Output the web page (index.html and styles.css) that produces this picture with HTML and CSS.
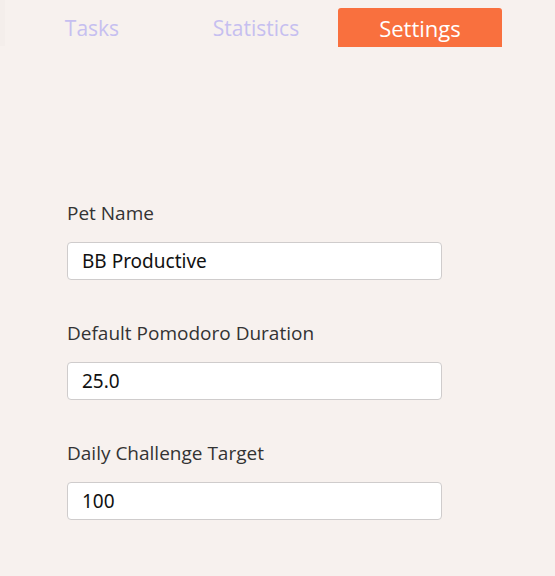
FILE: index.html
```html
<!DOCTYPE html>
<html>
<head>
<meta charset="utf-8">
<link rel="stylesheet" href="styles.css">
</head>
<body>
<div class="edge"></div>
<nav class="tabs">
  <div class="tab">Tasks</div>
  <div class="tab">Statistics</div>
  <div class="tab active">Settings</div>
</nav>
<main class="settings">
  <div class="field">
    <label class="label">Pet Name</label>
    <input class="input" type="text" value="BB Productive">
  </div>
  <div class="field">
    <label class="label">Default Pomodoro Duration</label>
    <input class="input" type="text" value="25.0">
  </div>
  <div class="field">
    <label class="label">Daily Challenge Target</label>
    <input class="input" type="text" value="100">
  </div>
</main>
</body>
</html>
```
FILE: styles.css
```css
html, body {
  margin: 0;
  padding: 0;
  background: #f7f1ee;
  height: 100%;
}
body {
  position: relative;
  font-family: "Open Sans", "Noto Sans", sans-serif;
}
.edge {
  position: absolute;
  left: 0;
  top: 0;
  width: 5px;
  height: 46px;
  background: #f4eeeb;
}
.tabs {
  display: flex;
  padding: 8px 10px 0;
}
.tab {
  width: 164px;
  height: 39px;
  display: flex;
  align-items: center;
  justify-content: center;
  font-size: 21px;
  color: #c6bff0;
  box-sizing: border-box;
}
.tab.active {
  background: #f9703e;
  color: #ffffff;
  border-radius: 3px 3px 0 0;
  font-size: 22px;
}
.settings {
  padding: 154px 0 0 67px;
  display: flex;
  flex-direction: column;
  gap: 41px;
}
.field {
  display: flex;
  flex-direction: column;
  gap: 17px;
}
.label {
  font-size: 19px;
  line-height: 24px;
  color: #333333;
}
.input {
  width: 375px;
  height: 38px;
  box-sizing: border-box;
  margin: 0;
  padding: 0 14px;
  border: 1px solid #cfcccc;
  border-radius: 4px;
  background: #ffffff;
  font-family: "Noto Sans", sans-serif;
  font-size: 19px;
  font-weight: 400;
  color: #111111;
  outline: none;
}
```
